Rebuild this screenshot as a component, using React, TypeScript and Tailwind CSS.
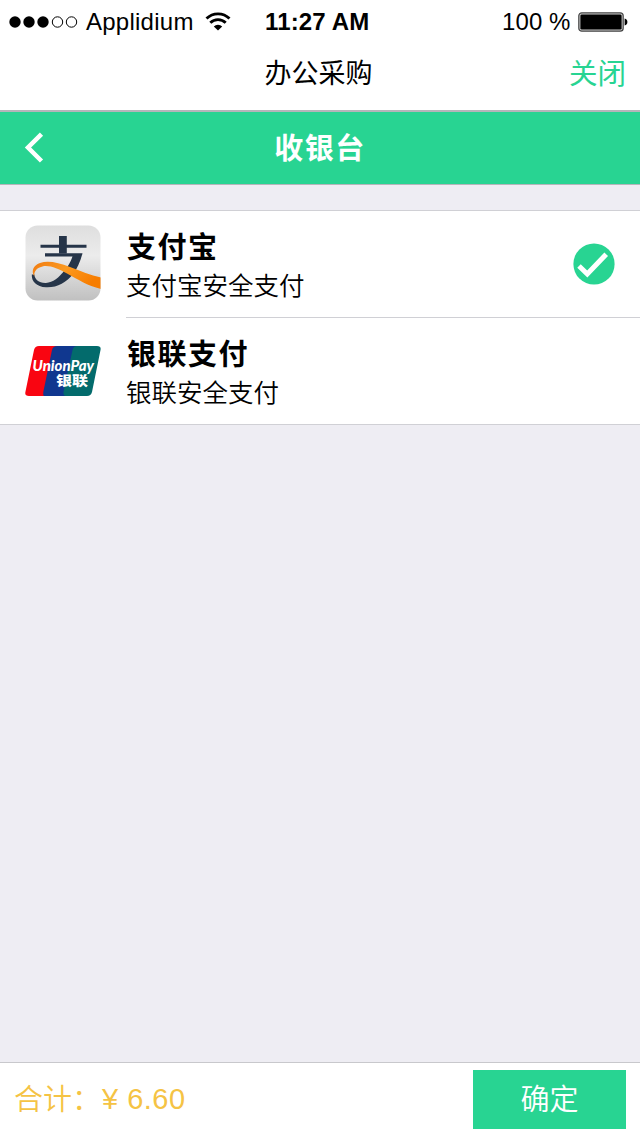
import { useState } from "react";

interface PayMethod {
  id: string;
  name: string;
  desc: string;
}

const methods: PayMethod[] = [
  { id: "alipay", name: "支付宝", desc: "支付宝安全支付" },
  { id: "unionpay", name: "银联支付", desc: "银联安全支付" },
];

function SignalDots() {
  return (
    <svg width="70" height="14" viewBox="0 0 70 14" className="shrink-0">
      <circle cx="7" cy="7" r="5.7" />
      <circle cx="21" cy="7" r="5.7" />
      <circle cx="35" cy="7" r="5.7" />
      <circle cx="49.5" cy="7" r="5.2" fill="none" stroke="#000" />
      <circle cx="63.5" cy="7" r="5.2" fill="none" stroke="#000" />
    </svg>
  );
}

function WifiIcon() {
  return (
    <svg width="26" height="20" viewBox="0 0 26 20" className="shrink-0">
      <path d="M1.5 6.6A16.3 16.3 0 0 1 24.5 6.6" fill="none" stroke="#000" strokeWidth="2.8" />
      <path d="M5.3 10.8A10.8 10.8 0 0 1 20.7 10.8" fill="none" stroke="#000" strokeWidth="2.8" />
      <path d="M8.8 14.5A5.9 5.9 0 0 1 17.2 14.5L13 18.6Z" />
    </svg>
  );
}

function BatteryIcon() {
  return (
    <svg width="50" height="20" viewBox="0 0 50 20" className="shrink-0">
      <rect x="0.8" y="0.8" width="44.4" height="18.4" rx="3" fill="#ccc" stroke="#444" strokeWidth="1.2" />
      <rect x="2.4" y="2.4" width="41.2" height="15.2" rx="1.4" />
      <path d="M46.6 6.6Q49.4 7.2 49.4 10T46.6 13.4Z" />
    </svg>
  );
}

function AlipayLogo() {
  return (
    <svg width="76" height="76" viewBox="0 0 76 76">
      <defs>
        <linearGradient id="plate" x1="0" y1="0" x2="0" y2="1">
          <stop offset="0" stopColor="#dedede" />
          <stop offset="0.4" stopColor="#ececec" />
          <stop offset="1" stopColor="#c0c0c0" />
        </linearGradient>
        <linearGradient id="ribbon" x1="0" y1="0" x2="1" y2="0.4">
          <stop offset="0" stopColor="#f07c12" />
          <stop offset="0.5" stopColor="#fc9a20" />
          <stop offset="1" stopColor="#f77d00" />
        </linearGradient>
        <clipPath id="plateClip">
          <rect x="0.5" y="0.5" width="75" height="75" rx="12" />
        </clipPath>
      </defs>
      <rect x="0.5" y="0.5" width="75" height="75" rx="12" fill="url(#plate)" />
      <g clipPath="url(#plateClip)" fill="#263549">
        <path d="M34 11H41.8V19.8H61.5V22.8H41.8V28.5H34V22.8H15.5V19.8H34Z" />
        <path d="M20 28.2H57.5C55.5 36.5 52 44 47.5 50L38.5 46.5C42.5 42 45.8 37 47.5 31.4H20Z" />
        <path d="M48.5 48.5C41 58 32 62.8 21 62.3C11.5 61.8 6.4 56.5 6.8 49.5L9.4 49.5C9.6 54.5 14 58.3 21 58C28 57.5 34 52.5 39.5 45.5Z" />
        <path
          d="M9.4 51.5C6 46.5 8 40.5 15 38C23 35.4 33 37.5 45 42C56 46.2 65 50 76 52.5V64C62 60.5 53 54.5 42 48.5C33 43.7 25 40 17.5 41.4C11 42.8 8.8 47 9.4 51.5Z"
          fill="url(#ribbon)"
        />
      </g>
    </svg>
  );
}

function UnionPayLogo() {
  return (
    <svg width="76" height="50" viewBox="0 0 76 50">
      <path d="M14 0H32L22 50H4Q-0.5 50 0.4 46L9 4Q10 0 14 0Z" fill="#f90511" />
      <path d="M32 0H54L42 50H19Q17.8 49 18.3 46L27 4Q28 0 32 0Z" fill="#10378f" />
      <path d="M52 0H72Q76.4 0 75.5 4L67 46Q66 50 62 50H40Q38 49 38.5 46L47.5 4Q48.5 0 52 0Z" fill="#036b6c" />
      <text
        x="7.5"
        y="24.5"
        fill="#fff"
        fontSize="15.5"
        fontWeight="900"
        fontStyle="italic"
        fontFamily="Lato, sans-serif"
        textLength="61.5"
        lengthAdjust="spacingAndGlyphs"
      >
        UnionPay
      </text>
      <text
        x="31"
        y="38.8"
        fill="#fff"
        fontSize="13"
        fontWeight="900"
        fontFamily="'Noto Sans CJK SC', sans-serif"
        textLength="32"
        lengthAdjust="spacingAndGlyphs"
      >
        银联
      </text>
    </svg>
  );
}

function CheckBadge() {
  return (
    <svg width="42" height="42" viewBox="0 0 42 42">
      <circle cx="21" cy="21" r="20.6" fill="#28d492" />
      <path d="M6 23L14.3 31L33.2 11.2" fill="none" stroke="#fff" strokeWidth="5" />
    </svg>
  );
}

export default function App() {
  const [selected, setSelected] = useState("alipay");

  return (
    <div className="flex h-[1136px] w-[640px] flex-col overflow-hidden bg-[#eeedf3] font-['Liberation_Sans','Noto_Sans_CJK_SC',sans-serif] text-black">
      {/* Status bar + page title */}
      <header className="h-[110px] bg-white">
        <div className="grid h-[43px] grid-cols-[265px_1fr_138px] items-center text-2xl leading-none">
          <div className="flex items-center pl-2">
            <SignalDots />
            <span className="ml-2 w-[108px] tracking-[0.25px]">Applidium</span>
            <span className="ml-[11px]">
              <WifiIcon />
            </span>
          </div>
          <span className="font-bold tracking-[0.15px]">11:27 AM</span>
          <div className="flex items-center whitespace-nowrap">
            <span className="w-[76px] tracking-[0.1px]">100 %</span>
            <BatteryIcon />
          </div>
        </div>
        <div className="grid h-[60px] grid-cols-[1fr_auto_1fr] items-center px-[14px] pt-[3px]">
          <span />
          <h1 className="pr-[3px] text-[27px] leading-none">办公采购</h1>
          <button className="justify-self-end text-[28.5px] leading-none text-[#28d492]">关闭</button>
        </div>
      </header>

      {/* Cashier navigation */}
      <nav className="grid h-[75px] grid-cols-[1fr_auto_1fr] items-center border-t-2 border-b border-[#b5b5ba] bg-[#28d492] text-white">
        <button className="pl-6">
          <svg width="20" height="32" viewBox="0 0 20 32">
            <path d="M17.5 2.2L4 15.5L17.5 29" fill="none" stroke="#fff" strokeWidth="4.5" />
          </svg>
        </button>
        <h2 className="pt-[3px] text-[29px] leading-none font-bold tracking-[1.5px]">收银台</h2>
        <span />
      </nav>

      {/* Payment methods */}
      <ul className="mt-[25px] border-y border-[#d0d0d5] bg-white">
        {methods.map((m, i) => (
          <li
            key={m.id}
            className={`flex cursor-pointer pl-[25px] ${i < methods.length - 1 ? "h-[107px]" : "h-[106px]"}`}
            onClick={() => setSelected(m.id)}
          >
            <div className={`flex w-[101px] items-center ${m.id === "alipay" ? "pb-[3px]" : "pb-px"}`}>
              {m.id === "alipay" ? <AlipayLogo /> : <UnionPayLogo />}
            </div>
            <div
              className={`flex flex-1 items-center justify-between pr-[25px] ${
                i < methods.length - 1 ? "border-b border-[#d0d0d5]" : ""
              }`}
            >
              <div className="pt-[5px]">
                <p className="pl-px text-[29px] leading-[38px] font-bold tracking-[1.5px]">{m.name}</p>
                <p className="text-[25.5px] leading-[38px] font-[350]">{m.desc}</p>
              </div>
              {selected === m.id && <CheckBadge />}
            </div>
          </li>
        ))}
      </ul>

      {/* Total and confirm */}
      <footer className="mt-auto flex h-[74px] items-center justify-between border-t border-[#c8c8cc] bg-white px-[14px]">
        <p className="flex items-center text-[29px] leading-none font-[350] text-[#f5c344]">
          <span className="w-[88px] pt-[2px]">合计：</span>
          <span className="tracking-[0.5px]">¥ 6.60</span>
        </p>
        <button className="h-[59px] w-[153px] bg-[#28d492] pt-[2px] text-[29px] leading-none font-[350] text-white">
          确定
        </button>
      </footer>
    </div>
  );
}
